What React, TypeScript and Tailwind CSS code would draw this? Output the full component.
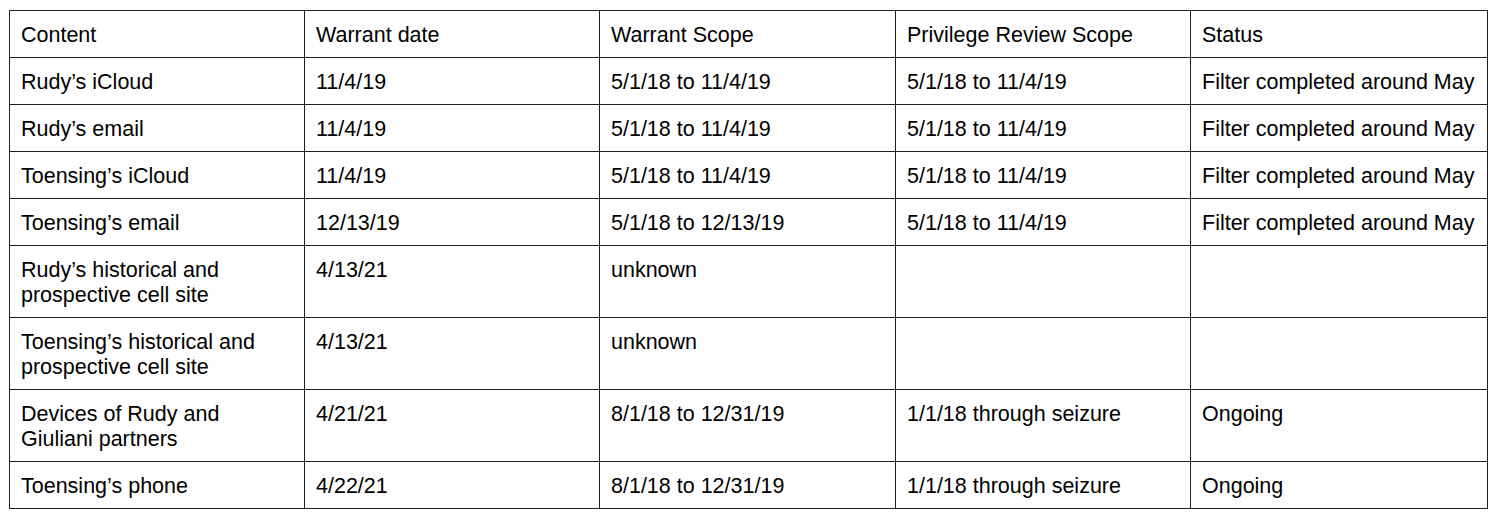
const rows: string[][] = [
  ["Content", "Warrant date", "Warrant Scope", "Privilege Review Scope", "Status"],
  ["Rudy’s iCloud", "11/4/19", "5/1/18 to 11/4/19", "5/1/18 to 11/4/19", "Filter completed around May"],
  ["Rudy’s email", "11/4/19", "5/1/18 to 11/4/19", "5/1/18 to 11/4/19", "Filter completed around May"],
  ["Toensing’s iCloud", "11/4/19", "5/1/18 to 11/4/19", "5/1/18 to 11/4/19", "Filter completed around May"],
  ["Toensing’s email", "12/13/19", "5/1/18 to 12/13/19", "5/1/18 to 11/4/19", "Filter completed around May"],
  ["Rudy’s historical and prospective cell site", "4/13/21", "unknown", "", ""],
  ["Toensing’s historical and prospective cell site", "4/13/21", "unknown", "", ""],
  ["Devices of Rudy and Giuliani partners", "4/21/21", "8/1/18 to 12/31/19", "1/1/18 through seizure", "Ongoing"],
  ["Toensing’s phone", "4/22/21", "8/1/18 to 12/31/19", "1/1/18 through seizure", "Ongoing"],
];

export default function App() {
  return (
    <div
      className="min-h-screen bg-white pl-[9px] pt-[10px] text-black"
      style={{ fontFamily: '"Liberation Sans", Arial, sans-serif' }}
    >
      <table className="table-fixed border-collapse w-[1478px] text-[21.5px] leading-[25px]">
        <colgroup>
          <col className="w-[295px]" />
          <col className="w-[295px]" />
          <col className="w-[296px]" />
          <col className="w-[295px]" />
          <col className="w-[297px]" />
        </colgroup>
        <tbody>
          {rows.map((row, i) => (
            <tr key={i}>
              {row.map((cell, j) => (
                <td
                  key={j}
                  className="border-[1.5px] border-[#1f1f1f] align-top pl-[11px] pr-[8px] pt-[12px] pb-[9px]"
                >
                  {cell}
                </td>
              ))}
            </tr>
          ))}
        </tbody>
      </table>
    </div>
  );
}
